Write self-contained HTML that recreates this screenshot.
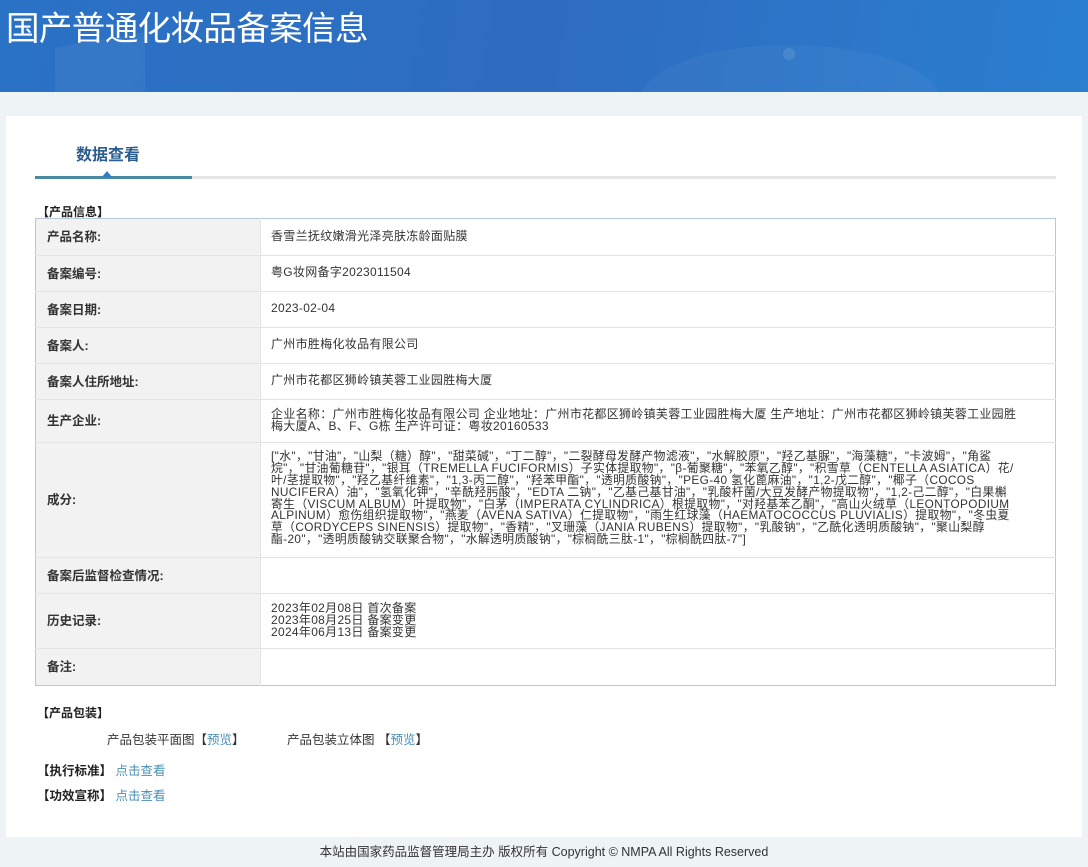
<!DOCTYPE html>
<html><head><meta charset="utf-8"><style>
*{margin:0;padding:0;box-sizing:border-box}
body{width:1088px;height:867px;background:#eef3f6;font-family:"Liberation Sans","Noto Sans CJK SC",sans-serif;color:#333;font-size:12px;position:relative;overflow:hidden}
.hdr{position:absolute;left:0;top:0;width:1088px;height:92px;background:linear-gradient(100deg,#2a72c6 0%,#2e6cc0 50%,#2a7fd0 100%);overflow:hidden}
.hdr h1{position:absolute;left:6px;top:1px;color:#fff;font-size:33.5px;font-weight:normal;letter-spacing:-0.6px;font-family:"Noto Sans CJK SC",sans-serif}
.panel{position:absolute;left:6px;top:116px;width:1076px;height:721px;background:#fff}
.tab{position:absolute;left:76px;top:141px;font-size:16px;font-weight:bold;color:#2c5d8f;font-family:"Noto Sans CJK SC",sans-serif}
.line{position:absolute;left:35px;top:176px;width:1021px;height:3px;background:#e5e5e5}
.line2{position:absolute;left:35px;top:176px;width:157px;height:3px;background:#4a8aa0}
.tri{position:absolute;left:102px;top:171px;width:0;height:0;border-left:5px solid transparent;border-right:5px solid transparent;border-bottom:6px solid #2d7fc2}
.sec{position:absolute;font-weight:bold;font-size:12px;color:#222}
table{position:absolute;left:35px;top:218px;width:1021px;border-collapse:collapse;border:1px solid #b8c8dc}
td{border-top:1px solid #e3e3e3;vertical-align:middle;font-size:12px}
td.l{width:225px;background:#f2f2f2;font-weight:bold;font-size:12.5px;padding-left:11px;padding-bottom:3px;color:#333;border-right:1px solid #e3e3e3}
td.v{padding-left:10px;color:#333;line-height:12px;letter-spacing:0.3px;padding-bottom:3px}
a{color:#4b8fb6;text-decoration:none}
.ft{position:absolute;left:0;top:841px;width:1088px;text-align:center;font-size:12.5px;color:#333}
</style></head><body>
<div class="hdr"><h1>国产普通化妆品备案信息</h1>
<div style="position:absolute;left:55px;top:40px;width:90px;height:60px;background:rgba(255,255,255,.05);transform:skewY(-10deg)"></div>
<div style="position:absolute;left:640px;top:45px;width:300px;height:110px;border-radius:50%;background:rgba(255,255,255,.04)"></div>
<div style="position:absolute;left:783px;top:48px;width:12px;height:12px;border-radius:50%;background:rgba(255,255,255,.1)"></div>
</div>
<div class="panel"></div>
<div class="tab">数据查看</div>
<div class="line"></div><div class="line2"></div><div class="tri"></div>
<div class="sec" style="left:37px;top:203px">【产品信息】</div>
<table>
<tr style="height:37px"><td class="l" style="border-top:none">产品名称:</td><td class="v" style="border-top:none">香雪兰抚纹嫩滑光泽亮肤冻龄面贴膜</td></tr>
<tr style="height:36px"><td class="l">备案编号:</td><td class="v">粤G妆网备字2023011504</td></tr>
<tr style="height:36px"><td class="l">备案日期:</td><td class="v">2023-02-04</td></tr>
<tr style="height:36px"><td class="l">备案人:</td><td class="v">广州市胜梅化妆品有限公司</td></tr>
<tr style="height:36px"><td class="l">备案人住所地址:</td><td class="v">广州市花都区狮岭镇芙蓉工业园胜梅大厦</td></tr>
<tr style="height:43px"><td class="l">生产企业:</td><td class="v">企业名称：广州市胜梅化妆品有限公司 企业地址：广州市花都区狮岭镇芙蓉工业园胜梅大厦 生产地址：广州市花都区狮岭镇芙蓉工业园胜<br>梅大厦A、B、F、G栋 生产许可证：粤妆20160533</td></tr>
<tr style="height:115px"><td class="l">成分:</td><td class="v" style="font-size:11.8px;line-height:11.8px;letter-spacing:0.38px">["水"，"甘油"，"山梨（糖）醇"，"甜菜碱"，"丁二醇"，"二裂酵母发酵产物滤液"，"水解胶原"，"羟乙基脲"，"海藻糖"，"卡波姆"，"角鲨<br>烷"，"甘油葡糖苷"，"银耳（TREMELLA FUCIFORMIS）子实体提取物"，"β-葡聚糖"，"苯氧乙醇"，"积雪草（CENTELLA ASIATICA）花/<br>叶/茎提取物"，"羟乙基纤维素"，"1,3-丙二醇"，"羟苯甲酯"，"透明质酸钠"，"PEG-40 氢化蓖麻油"，"1,2-戊二醇"，"椰子（COCOS<br>NUCIFERA）油"，"氢氧化钾"，"辛酰羟肟酸"，"EDTA 二钠"，"乙基己基甘油"，"乳酸杆菌/大豆发酵产物提取物"，"1,2-己二醇"，"白果槲<br>寄生（VISCUM ALBUM）叶提取物"，"白茅（IMPERATA CYLINDRICA）根提取物"，"对羟基苯乙酮"，"高山火绒草（LEONTOPODIUM<br>ALPINUM）愈伤组织提取物"，"燕麦（AVENA SATIVA）仁提取物"，"雨生红球藻（HAEMATOCOCCUS PLUVIALIS）提取物"，"冬虫夏<br>草（CORDYCEPS SINENSIS）提取物"，"香精"，"叉珊藻（JANIA RUBENS）提取物"，"乳酸钠"，"乙酰化透明质酸钠"，"聚山梨醇<br>酯-20"，"透明质酸钠交联聚合物"，"水解透明质酸钠"，"棕榈酰三肽-1"，"棕榈酰四肽-7"]</td></tr>
<tr style="height:36px"><td class="l">备案后监督检查情况:</td><td class="v"></td></tr>
<tr style="height:55px"><td class="l">历史记录:</td><td class="v">2023年02月08日 首次备案<br>2023年08月25日 备案变更<br>2024年06月13日 备案变更</td></tr>
<tr style="height:37px"><td class="l">备注:</td><td class="v"></td></tr>
</table>
<div class="sec" style="left:37px;top:704px">【产品包装】</div>
<div style="position:absolute;left:107px;top:729px;font-size:12.5px">产品包装平面图【<a>预览</a>】</div>
<div style="position:absolute;left:287px;top:729px;font-size:12.5px">产品包装立体图 【<a>预览</a>】</div>
<div class="sec" style="left:37px;top:760px;font-size:12.5px">【执行标准】 <a style="font-weight:normal">点击查看</a></div>
<div class="sec" style="left:37px;top:785px;font-size:12.5px">【功效宣称】 <a style="font-weight:normal">点击查看</a></div>
<div class="ft">本站由国家药品监督管理局主办 版权所有 Copyright © NMPA All Rights Reserved</div>
</body></html>
